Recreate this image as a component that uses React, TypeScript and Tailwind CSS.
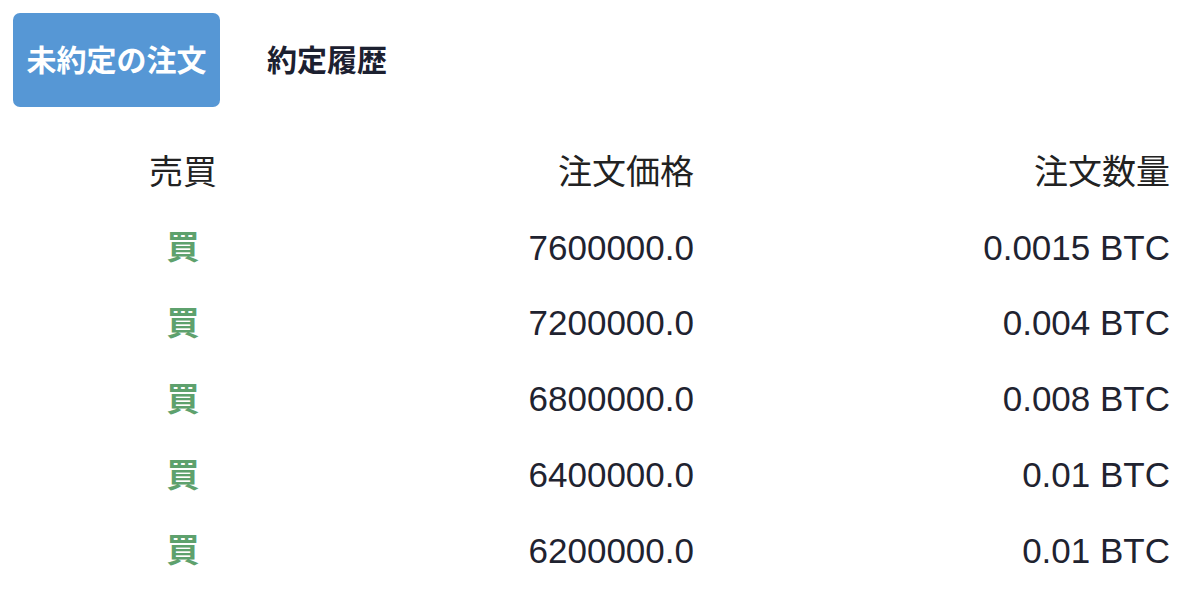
import React from 'react';

interface Order {
  side: string;
  price: string;
  amount: string;
}

const orders: Order[] = [
  { side: '買', price: '7600000.0', amount: '0.0015 BTC' },
  { side: '買', price: '7200000.0', amount: '0.004 BTC' },
  { side: '買', price: '6800000.0', amount: '0.008 BTC' },
  { side: '買', price: '6400000.0', amount: '0.01 BTC' },
  { side: '買', price: '6200000.0', amount: '0.01 BTC' },
];

const font = { fontFamily: '"Liberation Sans", "Noto Sans CJK JP", sans-serif' };

export default function App() {
  return (
    <div className="w-[1200px] h-[603px] bg-white text-[#1f2330] overflow-hidden" style={font}>
      {/* Tabs */}
      <div className="flex items-center gap-[47px] pl-[13px] pt-[13px]">
        <div className="w-[207px] h-[94px] rounded-[7px] bg-[#5697d5] flex items-center justify-center text-white text-[30px] font-bold">
          未約定の注文
        </div>
        <div className="text-[30px] font-bold text-[#1c2030]">約定履歴</div>
      </div>

      {/* Table */}
      <div className="mt-[27px] pl-[13px] pr-[30px]">
        <div className="grid grid-cols-[340px_341px_1fr] h-[76px] items-center text-[34px] text-[#222]">
          <div className="text-center">売買</div>
          <div className="text-right">注文価格</div>
          <div className="text-right">注文数量</div>
        </div>
        {orders.map((o, i) => (
          <div key={i} className="grid grid-cols-[340px_341px_1fr] h-[75.8px] items-center text-[35px]">
            <div className="text-center font-bold text-[33px] text-[#5ea16d]">{o.side}</div>
            <div className="text-right">{o.price}</div>
            <div className="text-right">{o.amount}</div>
          </div>
        ))}
      </div>
    </div>
  );
}
